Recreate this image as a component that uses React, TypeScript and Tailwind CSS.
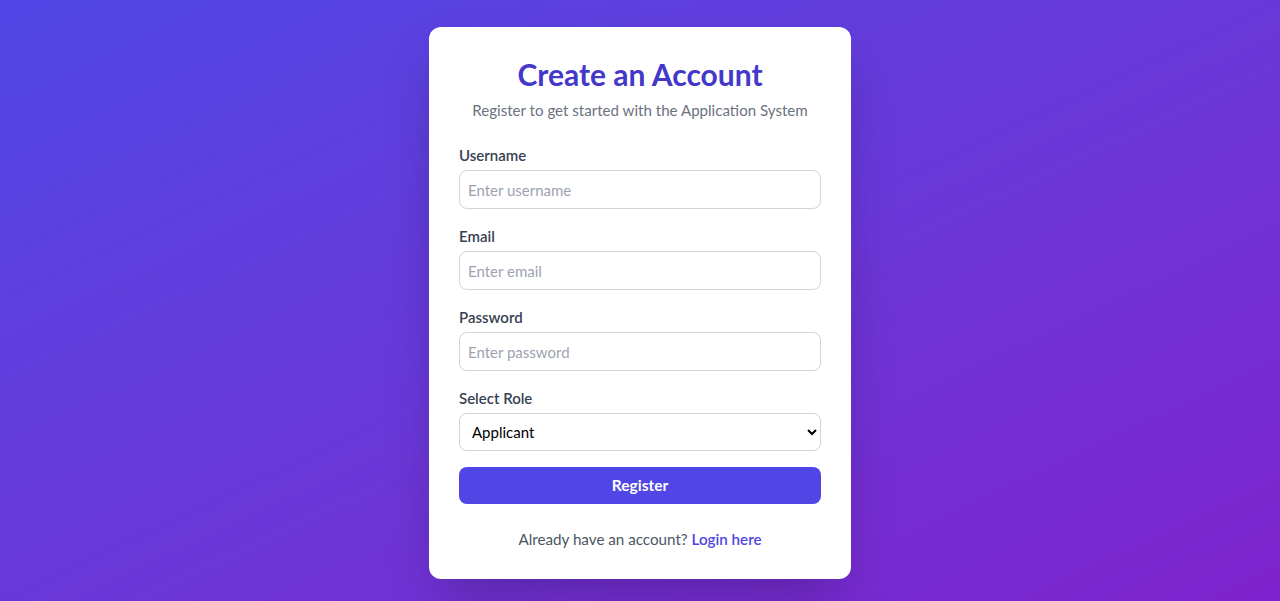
import React from "react";

export default function App() {
  return (
    <div className="min-h-screen w-full bg-gradient-to-br from-[#4f46e5] to-[#7e22ce] flex justify-center pt-[27px] pb-[22px] font-['Lato','Noto_Sans',sans-serif]">
      <div className="w-[422px] h-[552px] bg-white rounded-xl shadow-2xl px-[30px] pt-[28px]">
        <h1 className="text-[30px] leading-[38px] font-bold text-[#4338ca] text-center">Create an Account</h1>
        <p className="mt-[6px] text-[15.1px] leading-[22px] text-[#6b7280] text-center">Register to get started with the Application System</p>

        <div className="mt-[24px] flex flex-col gap-[17px]">
          {[
            { label: "Username", ph: "Enter username", type: "text" },
            { label: "Email", ph: "Enter email", type: "email" },
            { label: "Password", ph: "Enter password", type: "password" },
          ].map((f) => (
            <div key={f.label} className="flex flex-col">
              <label className="text-[15px] leading-[20px] font-semibold text-[#374151] mb-[5px]">{f.label}</label>
              <input
                type={f.type}
                placeholder={f.ph}
                className="h-[39px] w-full rounded-lg border border-[#d1d5db] px-2 text-[15px] text-gray-900 placeholder:text-[#9ca3af] outline-none"
              />
            </div>
          ))}
          <div className="flex flex-col">
            <label className="text-[15px] leading-[20px] font-semibold text-[#374151] mb-[5px]">Select Role</label>
            <select className="h-[38px] w-full rounded-lg border border-[#d1d5db] px-2 text-[15px] text-black bg-white outline-none">
              <option>Applicant</option>
              <option>Admin</option>
            </select>
          </div>
        </div>

        <button className="mt-[16px] h-[37px] w-full rounded-lg bg-[#4f46e5] text-white font-bold text-[15.5px]">Register</button>

        <p className="mt-[24px] text-center text-[15.2px] text-[#4b5563]">
          Already have an account? <a className="text-[#4f46e5] font-semibold" href="#">Login here</a>
        </p>
      </div>
    </div>
  );
}
